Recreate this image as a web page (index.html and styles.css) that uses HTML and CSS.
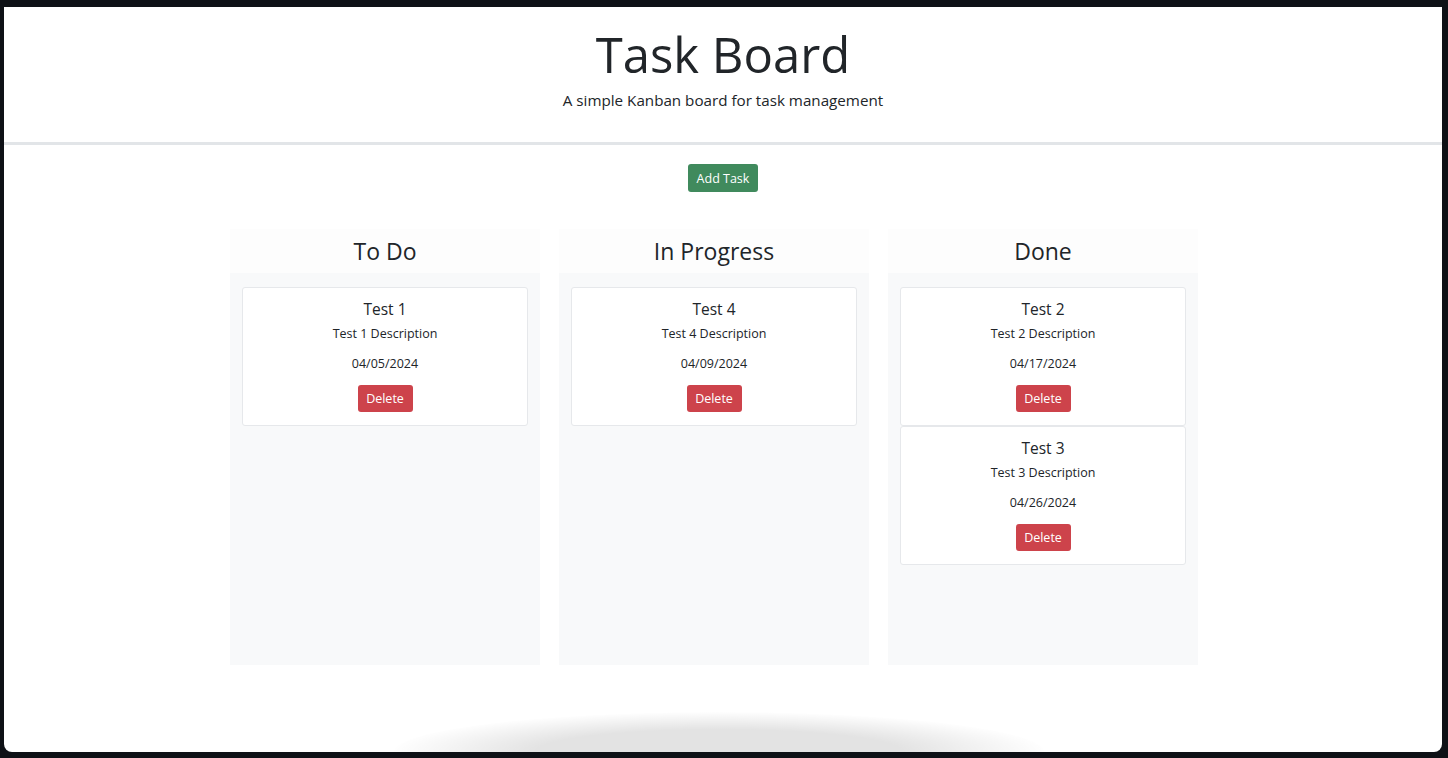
FILE: index.html
```html
<!doctype html>
<html lang="en">
<head>
    <meta charset="utf-8">
    <title>Task Board</title>
    <link rel="stylesheet" href="styles.css">
</head>
<body>
<div class="window">
    <header class="top">
        <h1>Task Board</h1>
        <p>A simple Kanban board for task management</p>
    </header>

    <div class="actions">
        <button class="btn btn-add">Add Task</button>
    </div>

    <div class="board">
        <div class="lane">
            <h2 class="lane-title">To Do</h2>
            <div class="lane-body">
                <div class="task">
                    <h3>Test 1</h3>
                    <p class="desc">Test 1 Description</p>
                    <p class="date">04/05/2024</p>
                    <button class="btn btn-del">Delete</button>
                </div>
            </div>
        </div>
        <div class="lane">
            <h2 class="lane-title">In Progress</h2>
            <div class="lane-body">
                <div class="task">
                    <h3>Test 4</h3>
                    <p class="desc">Test 4 Description</p>
                    <p class="date">04/09/2024</p>
                    <button class="btn btn-del">Delete</button>
                </div>
            </div>
        </div>
        <div class="lane">
            <h2 class="lane-title">Done</h2>
            <div class="lane-body">
                <div class="task">
                    <h3>Test 2</h3>
                    <p class="desc">Test 2 Description</p>
                    <p class="date">04/17/2024</p>
                    <button class="btn btn-del">Delete</button>
                </div>
                <div class="task">
                    <h3>Test 3</h3>
                    <p class="desc">Test 3 Description</p>
                    <p class="date">04/26/2024</p>
                    <button class="btn btn-del">Delete</button>
                </div>
            </div>
        </div>
    </div>

    <div class="shade"></div>
</div>
</body>
</html>
```

FILE: styles.css
```css
* {
    box-sizing: border-box;
}

html, body {
    margin: 0;
    padding: 0;
    height: 100%;
}

body {
    background: #0e1116;
    font-family: "Open Sans", "Noto Sans", sans-serif;
    color: #212529;
    padding: 7px 6px 6px 4px;
}

.window {
    position: relative;
    height: 745px;
    background: #fff;
    border-radius: 0 0 8px 8px;
    overflow: hidden;
}

.top {
    text-align: center;
    padding-top: 18px;
    height: 138px;
    border-bottom: 3px solid #e2e5e8;
}

.top h1 {
    margin: 0;
    font-size: 49px;
    font-weight: 400;
    line-height: 58px;
}

.top p {
    margin: 6px 0 0;
    font-size: 15.2px;
    line-height: 22px;
}

.actions {
    text-align: center;
    padding-top: 19px;
}

.btn {
    border: 0;
    color: #fff;
    font-family: inherit;
    font-size: 12.5px;
    border-radius: 3px;
    cursor: pointer;
}

.btn-add {
    background: #408a5d;
    width: 70px;
    height: 28px;
}

.btn-del {
    background: #cd434b;
    width: 55px;
    height: 27px;
    margin-top: 12px;
}

.board {
    display: flex;
    gap: 19px;
    margin: 37px 0 0 226px;
}

.lane {
    width: 310px;
    height: 436px;
    background: #f8f9fa;
    display: flex;
    flex-direction: column;
}

.lane-title {
    margin: 0;
    height: 44px;
    line-height: 44px;
    background: #fdfdfd;
    text-align: center;
    font-size: 23px;
    font-weight: 400;
}

.lane-body {
    padding: 14px 12px;
}

.task {
    background: #fff;
    border: 1px solid #e6e8eb;
    border-radius: 3px;
    text-align: center;
    padding: 10px 0 12px;
    height: 139px;
}

.task h3 {
    margin: 0;
    font-size: 15.5px;
    font-weight: 400;
    line-height: 22px;
}

.task p {
    margin: 0;
    font-size: 12.5px;
    line-height: 18px;
}

.task .desc {
    margin-top: 5px;
}

.task .date {
    margin-top: 12px;
}

.shade {
    position: absolute;
    left: 390px;
    bottom: -40px;
    width: 650px;
    height: 80px;
    border-radius: 50%;
    background: radial-gradient(ellipse at center, rgba(0,0,0,.11) 40%, rgba(0,0,0,0) 72%);
}
```
